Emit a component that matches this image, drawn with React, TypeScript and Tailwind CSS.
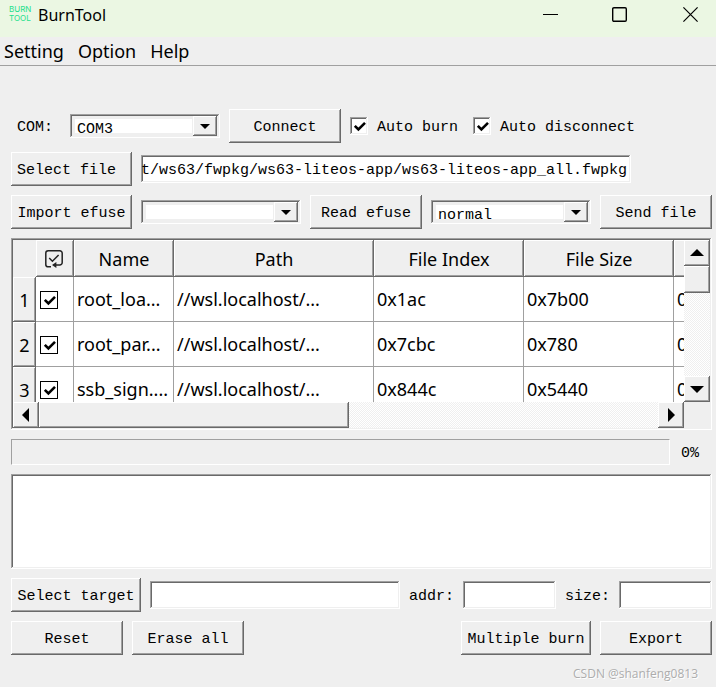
import type { ButtonHTMLAttributes, InputHTMLAttributes, ReactNode } from 'react';
import clsx from 'clsx';

const raised =
  'bg-[#efefef] shadow-[inset_-1px_-1px_#696969,inset_1px_1px_#fff,inset_-2px_-2px_#a0a0a0]';
const sunken =
  'shadow-[inset_-1px_-1px_#fff,inset_1px_1px_#a0a0a0,inset_-2px_-2px_#efefef,inset_2px_2px_#696969]';

const images = [
  { name: 'root_loa...', index: '0x1ac', size: '0x7b00' },
  { name: 'root_par...', index: '0x7cbc', size: '0x780' },
  { name: 'ssb_sign....', index: '0x844c', size: '0x5440' },
];

function Button({ className, ...props }: ButtonHTMLAttributes<HTMLButtonElement>) {
  return (
    <button
      type="button"
      className={clsx('h-[34px] shrink-0 pt-[3px] whitespace-nowrap', raised, className)}
      {...props}
    />
  );
}

function TextField({ className, ...props }: InputHTMLAttributes<HTMLInputElement>) {
  return (
    <input
      type="text"
      className={clsx('h-7 min-w-0 bg-white pt-0.5 outline-none', sunken, className)}
      {...props}
    />
  );
}

interface ComboProps {
  label: string;
  options: string[];
  className?: string;
  id?: string;
}

function Combo({ label, options, className, id }: ComboProps) {
  return (
    <div className={clsx('relative h-6 py-[5px] pr-7 pl-[5px]', sunken, className)}>
      <select
        id={id}
        aria-label={label}
        className="block h-3.5 w-full appearance-none bg-white pt-[3px] pl-0.5 leading-4 outline-none"
      >
        {options.map((option) => (
          <option key={option}>{option}</option>
        ))}
      </select>
      <span
        className={clsx(
          'pointer-events-none absolute top-0.5 right-[3px] flex h-5 w-6 items-center justify-center',
          raised,
        )}
      >
        <svg width="10" height="5" viewBox="0 0 10 5">
          <path d="M0 0h10L5 5z" />
        </svg>
      </span>
    </div>
  );
}

function Tick() {
  return (
    <svg
      className="pointer-events-none absolute inset-0 hidden peer-checked:block"
      width="18"
      height="18"
      viewBox="0 0 18 18"
      fill="none"
      stroke="#000"
      strokeWidth="2.6"
    >
      <path d="M4.8 8.8l3.6 3.7 6.6-6.6" />
    </svg>
  );
}

function CheckOption({ children }: { children: ReactNode }) {
  return (
    <label className="flex shrink-0 items-center gap-[9px] whitespace-nowrap">
      <span className="relative size-[18px]">
        <input
          type="checkbox"
          defaultChecked
          className={clsx('peer block size-[18px] appearance-none bg-white', sunken)}
        />
        <Tick />
      </span>
      <span className="pt-[3px]">{children}</span>
    </label>
  );
}

function ScrollButton({ label, path }: { label: string; path: string }) {
  return (
    <button
      type="button"
      aria-label={label}
      className={clsx('flex size-[26px] shrink-0 items-center justify-center', raised)}
    >
      <svg width="14" height="14" viewBox="0 0 14 14">
        <path d={path} />
      </svg>
    </button>
  );
}

function TitleBar() {
  return (
    <header className="flex h-[37px] items-start bg-[#ebf7e3] pl-[9px] font-['Noto_Sans',sans-serif]">
      <div className="mt-[5px] w-[29px] font-['Inter',sans-serif] text-[8px] leading-[9px] text-[#1fe08c]">
        <div>BURN</div>
        <div>TOOL</div>
      </div>
      <h1 className="mt-[3px] flex-1 text-base">BurnTool</h1>
      <div className="flex pt-[7px] pr-[18px]">
        <button type="button" aria-label="Minimize" className="mr-[54px]">
          <svg width="15" height="15" viewBox="0 0 15 15" stroke="#000">
            <path d="M0 7.5h15" />
          </svg>
        </button>
        <button type="button" aria-label="Maximize" className="mr-14">
          <svg width="15" height="15" viewBox="0 0 15 15" fill="none" stroke="#000" strokeWidth="1.4">
            <rect x=".7" y=".7" width="13.6" height="13.6" rx="1.2" />
          </svg>
        </button>
        <button type="button" aria-label="Close">
          <svg width="15" height="15" viewBox="0 0 15 15" stroke="#000" strokeWidth="1.2">
            <path d="M.4.4l14.2 14.2M14.6.4L.4 14.6" />
          </svg>
        </button>
      </div>
    </header>
  );
}

function ImageTable() {
  return (
    <div className={clsx('grid h-48 grid-cols-[1fr_26px] grid-rows-[1fr_26px] p-0.5', sunken)}>
      <div className="min-h-0 min-w-0 overflow-hidden bg-white">
        <table className="w-[811px] table-fixed border-separate border-spacing-0 text-left font-['Noto_Sans',sans-serif] text-lg">
          <colgroup>
            <col className="w-[23px]" />
            <col className="w-[38px]" />
            <col className="w-[100px]" />
            <col className="w-[200px]" />
            <col className="w-[150px]" />
            <col className="w-[150px]" />
            <col className="w-[150px]" />
          </colgroup>
          <thead>
            <tr className="h-[37px]">
              <td className="bg-[#efefef]" />
              <th className={clsx('p-0 pr-0.5', raised)}>
                <svg
                  className="mx-auto block"
                  width="18"
                  height="18"
                  viewBox="0 0 18 18"
                  fill="none"
                  stroke="#222"
                  strokeWidth="1.5"
                >
                  <path d="M6 16.8H3.2A2.4 2.4 0 0 1 .8 14.4V3.2A2.4 2.4 0 0 1 3.2.8h11.6a2.4 2.4 0 0 1 2.4 2.4v9.4a2.4 2.4 0 0 1-2.4 2.4H10" />
                  <path d="M4.2 8l3.2 3.2 6.2-6.2" />
                  <path d="M11.4 12v6L7 15z" fill="#222" stroke="none" />
                </svg>
              </th>
              {['Name', 'Path', 'File Index', 'File Size', ''].map((title) => (
                <th key={title} scope="col" className={clsx('p-0 text-center font-normal', raised)}>
                  {title}
                </th>
              ))}
            </tr>
          </thead>
          <tbody>
            {images.map((image, i) => (
              <tr key={image.name} className="h-[45px] *:border-[#a0a0a0]">
                <th scope="row" className={clsx('p-0 text-center font-normal', raised)}>
                  {i + 1}
                </th>
                <td className="border-r border-b p-0 pt-0.5 pl-1">
                  <span className="relative block size-[18px]">
                    <input
                      type="checkbox"
                      defaultChecked
                      aria-label={`Burn ${image.name}`}
                      className="peer block size-[18px] appearance-none border border-black bg-white"
                    />
                    <Tick />
                  </span>
                </td>
                <td className="border-r border-b p-0 pl-[3px]">{image.name}</td>
                <td className="border-r border-b p-0 pl-[3px]">//wsl.localhost/...</td>
                <td className="border-r border-b p-0 pl-[3px]">{image.index}</td>
                <td className="border-r border-b p-0 pl-[3px]">{image.size}</td>
                <td className="border-r border-b p-0 pl-[3px]">0</td>
              </tr>
            ))}
          </tbody>
        </table>
      </div>
      <div className="flex min-h-0 flex-col bg-[repeating-conic-gradient(#fff_0_25%,#efefef_0_50%)] bg-size-[2px_2px]">
        <ScrollButton label="Scroll up" path="M0 10h14L7 3z" />
        <div className={clsx('h-[27px]', raised)} />
        <div className="flex-1" />
        <ScrollButton label="Scroll down" path="M0 4h14l-7 7z" />
      </div>
      <div className="flex min-w-0 bg-[repeating-conic-gradient(#fff_0_25%,#efefef_0_50%)] bg-size-[2px_2px]">
        <ScrollButton label="Scroll left" path="M10 0v14L3 7z" />
        <div className="flex-1">
          <div className={clsx('h-full w-1/2', raised)} />
        </div>
        <ScrollButton label="Scroll right" path="M4 0v14l7-7z" />
      </div>
      <div className="bg-[#efefef]" />
    </div>
  );
}

export default function App() {
  return (
    <div className="flex min-h-screen flex-col bg-[#efefef] font-['Liberation_Mono',monospace] text-[15px] leading-5 text-black">
      <TitleBar />
      <nav className="flex h-[29px] items-center gap-3.5 border-b border-[#a0a0a0] pl-1 font-['Noto_Sans',sans-serif] text-lg">
        <button type="button">Setting</button>
        <button type="button">Option</button>
        <button type="button">Help</button>
      </nav>

      <main className="flex flex-col gap-[9px] pt-[43px] pr-1 pl-[11px]">
        <div className="flex items-center gap-[9px]">
          <label htmlFor="com" className="w-[50px] pt-[3px] pl-1.5">
            COM:
          </label>
          <Combo id="com" label="COM port" options={['COM3']} className="w-[150px]" />
          <Button className="w-28">Connect</Button>
          <div className="flex gap-[15px]">
            <CheckOption>Auto burn</CheckOption>
            <CheckOption>Auto disconnect</CheckOption>
          </div>
        </div>

        <div className="flex items-center gap-[9px]">
          <Button className="w-[121px] pr-2.5">Select file</Button>
          <TextField
            aria-label="Firmware file"
            className="mr-[81px] flex-1"
            defaultValue="t/ws63/fwpkg/ws63-liteos-app/ws63-liteos-app_all.fwpkg"
          />
        </div>

        <div className="flex items-center gap-[9px]">
          <Button className="w-[121px]">Import efuse</Button>
          <Combo label="Efuse file" options={['']} className="flex-1" />
          <Button className="w-28">Read efuse</Button>
          <Combo label="Mode" options={['normal']} className="flex-1" />
          <Button className="w-28">Send file</Button>
        </div>

        <ImageTable />

        <div className="flex items-center gap-[9px]">
          <div
            role="progressbar"
            aria-label="Burn progress"
            aria-valuenow={0}
            className="h-[26px] flex-1 border border-t-[#a0a0a0] border-r-white border-b-white border-l-[#a0a0a0]"
          />
          <span className="w-[33px] pt-[3px] pl-0.5">0%</span>
        </div>

        <textarea
          aria-label="Log"
          className={clsx('block h-[95px] w-full resize-none bg-white p-1 outline-none', sunken)}
        />

        <div className="flex items-center gap-[9px]">
          <Button className="w-[130px]">Select target</Button>
          <TextField aria-label="Target file" className="flex-1" />
          <label htmlFor="addr" className="pt-[3px]">
            addr:
          </label>
          <TextField id="addr" className="w-[93px]" />
          <label htmlFor="size" className="pt-[3px]">
            size:
          </label>
          <TextField id="size" className="w-[93px]" />
        </div>

        <div className="flex items-center gap-[9px]">
          <Button className="w-28">Reset</Button>
          <Button className="w-28">Erase all</Button>
          <Button className="ml-auto w-[130px]">Multiple burn</Button>
          <Button className="w-28">Export</Button>
        </div>
      </main>

      <footer className="pt-[9px] pr-[18px] text-right font-['Open_Sans',sans-serif] text-xs/5 text-[#adadad] [text-shadow:1px_1px_#fff]">
        CSDN @shanfeng0813
      </footer>
    </div>
  );
}
